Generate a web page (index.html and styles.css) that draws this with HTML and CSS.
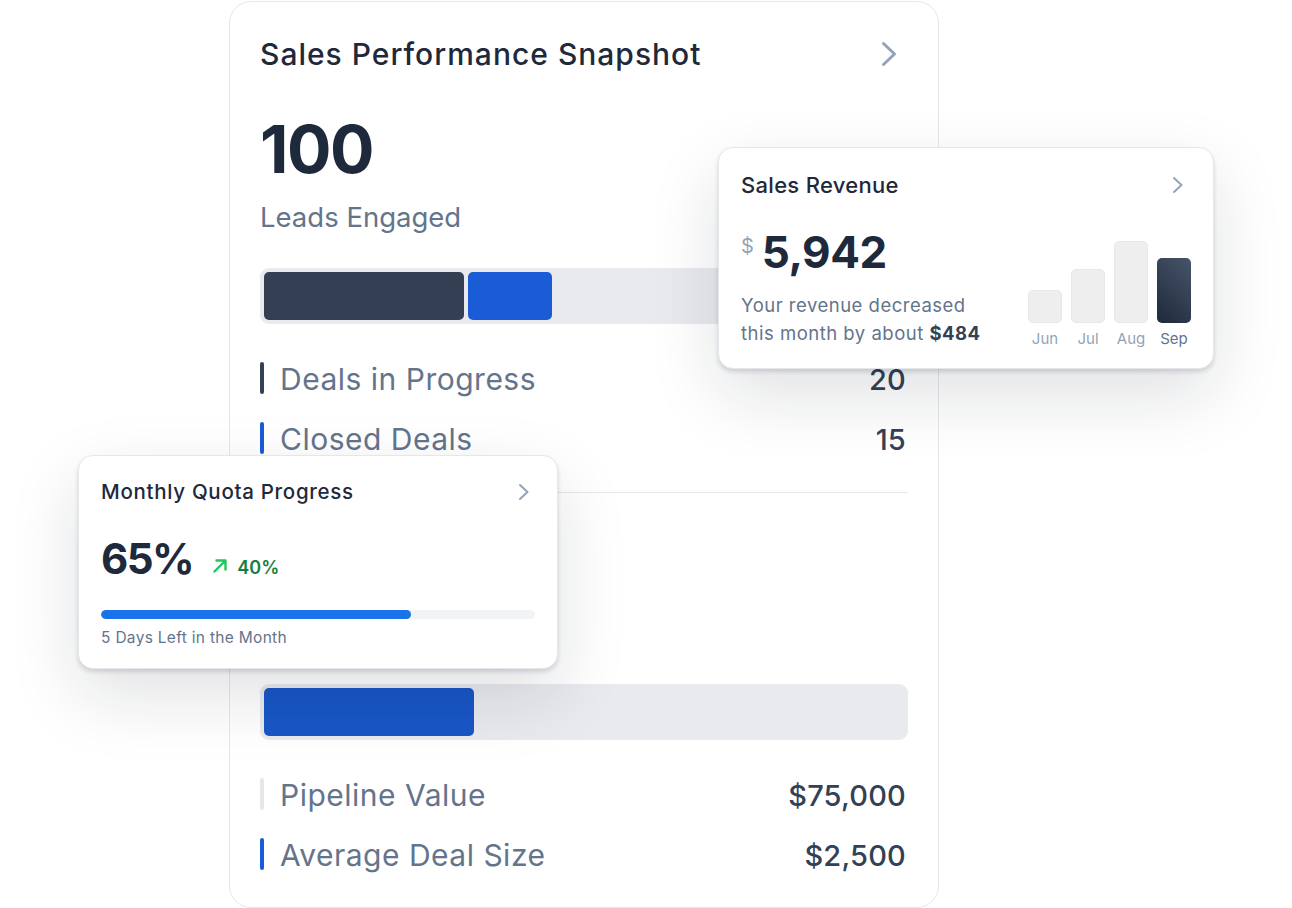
FILE: index.html
```html
<!DOCTYPE html>
<html lang="en">
<head>
<meta charset="utf-8">
<title>Sales Performance Snapshot</title>
<link rel="stylesheet" href="styles.css">
</head>
<body>
<div class="canvas">
  <section class="main-card">
    <header class="main-head">
      <h1 class="main-title">Sales Performance Snapshot</h1>
      <svg class="main-chevron" width="16" height="26" viewBox="0 0 16 26" fill="none"><path d="M2.5 2.5 L13.5 13 L2.5 23.5" stroke="#94a3b8" stroke-width="3" stroke-linecap="round" stroke-linejoin="round"/></svg>
    </header>

    <div class="metric">
      <div class="big-number">100</div>
      <div class="big-label">Leads Engaged</div>
      <div class="track">
        <div class="seg seg-dark" style="width:200px"></div>
        <div class="seg seg-blue" style="width:84px"></div>
      </div>
      <ul class="rows">
        <li class="row"><span class="marker marker-dark"></span><span class="row-label">Deals in Progress</span><span class="row-value">20</span></li>
        <li class="row"><span class="marker marker-blue"></span><span class="row-label">Closed Deals</span><span class="row-value">15</span></li>
      </ul>
    </div>

    <hr class="divider">

    <div class="metric metric-second">
      <div class="big-number-space"></div>
      <div class="big-label-space"></div>
      <div class="track">
        <div class="seg seg-blue2" style="width:210px"></div>
      </div>
      <ul class="rows">
        <li class="row"><span class="marker marker-light"></span><span class="row-label">Pipeline Value</span><span class="row-value">$75,000</span></li>
        <li class="row"><span class="marker marker-blue"></span><span class="row-label">Average Deal Size</span><span class="row-value">$2,500</span></li>
      </ul>
    </div>
  </section>

  <section class="float-card revenue-card">
    <header class="card-head">
      <h2 class="card-title">Sales Revenue</h2>
      <svg class="small-chevron" width="12" height="18" viewBox="0 0 12 18" fill="none"><path d="M2 2 L9.5 9 L2 16" stroke="#94a3b8" stroke-width="2" stroke-linecap="round" stroke-linejoin="round"/></svg>
    </header>
    <div class="revenue-body">
      <div class="revenue-left">
        <div class="amount"><span class="currency">$</span><span class="amount-value">5,942</span></div>
        <p class="revenue-desc">Your revenue decreased<br>this month by about <strong>$484</strong></p>
      </div>
      <div class="chart">
        <div class="bar-col"><div class="bar" style="height:33px"></div><span class="bar-label">Jun</span></div>
        <div class="bar-col"><div class="bar" style="height:54px"></div><span class="bar-label">Jul</span></div>
        <div class="bar-col"><div class="bar" style="height:82px"></div><span class="bar-label">Aug</span></div>
        <div class="bar-col"><div class="bar bar-active" style="height:65px"></div><span class="bar-label label-active">Sep</span></div>
      </div>
    </div>
  </section>

  <section class="float-card quota-card">
    <header class="card-head">
      <h2 class="card-title quota-title">Monthly Quota Progress</h2>
      <svg class="small-chevron" width="12" height="18" viewBox="0 0 12 18" fill="none"><path d="M2 2 L9.5 9 L2 16" stroke="#94a3b8" stroke-width="2" stroke-linecap="round" stroke-linejoin="round"/></svg>
    </header>
    <div class="quota-line">
      <span class="quota-value">65%</span>
      <svg class="trend-icon" width="16" height="16" viewBox="0 0 16 16" fill="none"><path d="M2.5 13.5 L13 3 M4.5 2.5 H13.5 V11.5" stroke="#22c55e" stroke-width="2.4" stroke-linecap="round" stroke-linejoin="round"/></svg>
      <span class="trend-value">40%</span>
    </div>
    <div class="progress"><div class="progress-fill" style="width:71.5%"></div></div>
    <p class="quota-note">5 Days Left in the Month</p>
  </section>
</div>
</body>
</html>
```

FILE: styles.css
```css
* { box-sizing: border-box; }

html, body {
  margin: 0;
  padding: 0;
  background: #ffffff;
}

body {
  font-family: Inter, "Noto Sans", "Liberation Sans", sans-serif;
  color: #1e293b;
}

.canvas {
  position: relative;
  width: 1292px;
  height: 908px;
  overflow: hidden;
  padding: 1px 0 0 229px;
}

/* ---------- main card ---------- */
.main-card {
  width: 710px;
  border: 1px solid #e5e7eb;
  border-radius: 22px;
  background: #ffffff;
  padding: 32px 30px 37px;
}

.main-head {
  display: flex;
  align-items: center;
  justify-content: space-between;
}

.main-title {
  margin: 0;
  font-size: 30px;
  line-height: 40px;
  font-weight: 500;
  letter-spacing: 1px;
  color: #1e293b;
}

.main-chevron {
  display: block;
  margin-right: 11px;
}

.metric {
  margin-top: 43px;
}

.metric-second {
  margin-top: 40px;
}

.big-number {
  font-size: 66px;
  line-height: 64px;
  font-weight: 700;
  letter-spacing: -1.5px;
  color: #1e293b;
}

.big-number-space {
  height: 64px;
}

.big-label {
  margin-top: 18px;
  font-size: 27.5px;
  line-height: 36px;
  color: #64748b;
}

.big-label-space {
  margin-top: 18px;
  height: 36px;
}

.track {
  margin-top: 33px;
  height: 56px;
  padding: 4px;
  background: #e9eaee;
  border-radius: 9px;
  display: flex;
  gap: 4px;
}

.seg {
  height: 48px;
  border-radius: 5px;
}

.seg-dark { background: #343f53; }
.seg-blue { background: #195cd6; }
.seg-blue2 { background: #1956c6; }

.rows {
  list-style: none;
  margin: 38px 0 0;
  padding: 0;
  display: flex;
  flex-direction: column;
  gap: 28px;
}

.row {
  display: flex;
  align-items: center;
  height: 32px;
}

.marker {
  width: 4px;
  height: 32px;
  border-radius: 2px;
  margin-right: 16px;
  flex: none;
}

.marker-dark { background: #334155; }
.marker-blue { background: #1a5cd7; }
.marker-light { background: #e5e7eb; }

.row-label {
  flex: 1;
  padding-top: 2px;
  font-size: 30px;
  line-height: 34px;
  letter-spacing: 0.5px;
  color: #64748b;
}

.row-value {
  padding-top: 3px;
  font-size: 29px;
  line-height: 34px;
  font-weight: 500;
  letter-spacing: 0.2px;
  color: #334155;
  margin-right: 2px;
}

.divider {
  margin: 38px 0 0;
  border: 0;
  border-top: 1px solid #e5e7eb;
}

/* ---------- floating cards ---------- */
.float-card {
  position: absolute;
  background: #ffffff;
  border: 1px solid #e5e7eb;
  border-radius: 15px;
  box-shadow: 0 26px 70px rgba(15, 23, 42, 0.13), 0 3px 4px rgba(15, 23, 42, 0.14);
}

.card-head {
  display: flex;
  align-items: center;
  justify-content: space-between;
}

.card-title {
  margin: 0;
  font-size: 22px;
  line-height: 28px;
  font-weight: 500;
  letter-spacing: 0.3px;
  color: #1e293b;
}

.small-chevron {
  display: block;
}

/* revenue card */
.revenue-card {
  left: 718px;
  top: 147px;
  width: 496px;
  height: 222px;
  padding: 23px 22px 20px;
}

.revenue-card .small-chevron {
  margin-right: 7px;
}

.revenue-body {
  display: flex;
  align-items: flex-end;
  justify-content: space-between;
}

.revenue-left {
  display: flex;
  flex-direction: column;
}

.amount {
  margin-top: 31px;
  display: flex;
  align-items: flex-start;
}

.currency {
  font-size: 20px;
  line-height: 20px;
  color: #94a3b8;
  margin-top: 6px;
  margin-right: 8px;
}

.amount-value {
  font-size: 44px;
  line-height: 44px;
  font-weight: 700;
  letter-spacing: -0.5px;
  color: #1e293b;
}

.revenue-desc {
  margin: 17px 0 0;
  font-size: 18.5px;
  line-height: 28px;
  letter-spacing: 0.5px;
  color: #64748b;
}

.revenue-desc strong {
  font-weight: 700;
  color: #334155;
}

.chart {
  display: flex;
  align-items: flex-end;
  gap: 9px;
  margin-bottom: -2px;
}

.bar-col {
  display: flex;
  flex-direction: column;
  align-items: center;
  width: 34px;
}

.bar {
  width: 34px;
  border-radius: 5px;
  background: #eeeeee;
  border: 1px solid #e8e8e8;
}

.bar-active {
  border: 0;
  background: linear-gradient(45deg, #1e293b 0%, #475569 100%);
}

.bar-label {
  margin-top: 6px;
  font-size: 15px;
  line-height: 20px;
  color: #94a3b8;
}

.label-active {
  color: #64748b;
}

/* quota card */
.quota-card {
  left: 78px;
  top: 455px;
  width: 480px;
  height: 214px;
  padding: 23px 22px 20px;
}

.quota-title {
  font-size: 20.5px;
  line-height: 26px;
  letter-spacing: 0.7px;
}

.quota-card .small-chevron {
  margin-right: 5px;
}

.quota-line {
  margin-top: 33px;
  display: flex;
  align-items: baseline;
}

.quota-value {
  font-size: 42px;
  line-height: 42px;
  font-weight: 700;
  letter-spacing: -1.5px;
  color: #1e293b;
}

.trend-icon {
  margin-left: 19px;
}

.trend-value {
  margin-left: 9px;
  font-size: 18px;
  font-weight: 600;
  color: #15803d;
}

.progress {
  margin-top: 30px;
  height: 9px;
  border-radius: 5px;
  background: #f1f3f6;
  overflow: hidden;
}

.progress-fill {
  height: 100%;
  border-radius: 5px;
  background: #1a73e8;
}

.quota-note {
  margin: 9px 0 0;
  font-size: 15.5px;
  line-height: 20px;
  letter-spacing: 0.3px;
  color: #64748b;
}
```
